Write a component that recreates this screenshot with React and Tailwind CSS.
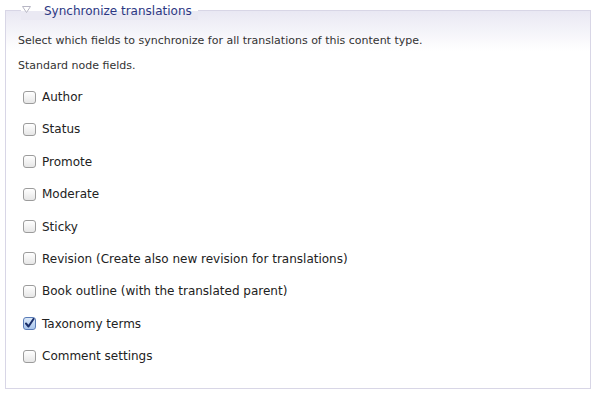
export default function App() {
  const fields = [
    { label: "Author", checked: false },
    { label: "Status", checked: false },
    { label: "Promote", checked: false },
    { label: "Moderate", checked: false },
    { label: "Sticky", checked: false },
    { label: "Revision (Create also new revision for translations)", checked: false },
    { label: "Book outline (with the translated parent)", checked: false },
    { label: "Taxonomy terms", checked: true },
    { label: "Comment settings", checked: false },
  ];
  return (
    <div className="w-[596px] h-[394px] bg-white pt-[10px] pl-[5px] font-['DejaVu_Sans',Verdana,sans-serif] text-[#333]">
      <fieldset className="relative w-[586px] h-[379px] border border-[#d8d6e6] bg-[linear-gradient(to_bottom,#e9e8f3_0px,#ffffff_40px)]">
        <legend className="absolute left-[15px] top-[-9px] flex items-center bg-transparent">
          <span className="flex items-center bg-[linear-gradient(to_bottom,#ffffff_9px,#eae9f3_9px)] pl-[1px] pr-[6px] h-[18px]">
            <svg width="9" height="7" viewBox="0 0 9 7" className="mt-[-3px]">
              <path d="M0.5 0.5 L8.5 0.5 L4.5 6.5 Z" fill="#fff" stroke="#b7b6c4" strokeWidth="1" />
            </svg>
            <span className="ml-[13px] text-[12px] leading-[18px] text-[#2c3783]">Synchronize translations</span>
          </span>
        </legend>
        <div className="pl-[12px] pt-[22px]">
          <p className="text-[11px] leading-[16px]">Select which fields to synchronize for all translations of this content type.</p>
          <p className="mt-[9px] text-[11px] leading-[16px]">Standard node fields.</p>
          <div className="mt-[15px] flex flex-col gap-[16.4px]">
            {fields.map((f) => (
              <label key={f.label} className="flex items-center h-[16px] text-[12px]">
                <span
                  className={
                    "ml-[5px] w-[13px] h-[13px] rounded-[3px] border flex items-center justify-center " +
                    (f.checked
                      ? "border-[#5a7cb7] bg-[linear-gradient(to_bottom,#dbe8f8,#a9c6ec)]"
                      : "border-[#9c9c9c] bg-[linear-gradient(to_bottom,#ffffff,#e6e6e6)]")
                  }
                >
                  {f.checked && (
                    <svg width="11" height="11" viewBox="0 0 11 11">
                      <path d="M2 5.5 L4.5 8.5 L9.5 1" fill="none" stroke="#1a2f6a" strokeWidth="2" strokeLinecap="round" strokeLinejoin="round" />
                    </svg>
                  )}
                </span>
                <span className="ml-[6px] text-[#222]">{f.label}</span>
              </label>
            ))}
          </div>
        </div>
      </fieldset>
    </div>
  );
}
